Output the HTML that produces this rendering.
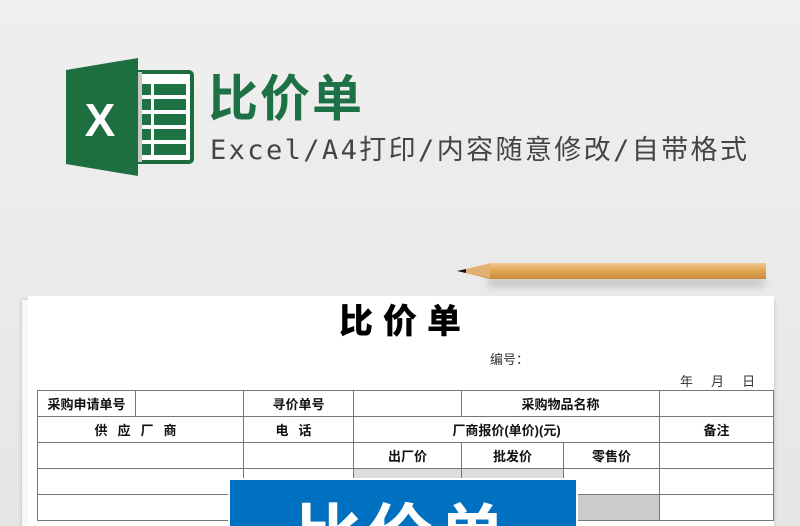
<!DOCTYPE html>
<html style="width:800px;height:526px;overflow:hidden"><head><meta charset="utf-8"><style>
body{margin:0;width:800px;height:526px;overflow:hidden;background:#ebebeb;font-family:"Liberation Sans","Noto Sans CJK SC",sans-serif;position:relative}
.a{position:absolute}
table{border-collapse:collapse;position:absolute;left:37px;top:390px;width:736px;table-layout:fixed}
td{border:1px solid #777;height:25px;font-size:13px;font-weight:bold;text-align:center;padding:0;color:#111}
</style></head><body>
<div class="a" style="left:0;top:0;width:800px;height:526px;background:linear-gradient(#efefef,#e6e6e6)"></div>
<svg class="a" style="left:66px;top:58px" width="130" height="118" viewBox="0 0 130 118">
<rect x="62" y="14" width="64" height="90" rx="3" fill="#fff" stroke="#1d6b3c" stroke-width="4"/>
<rect x="62" y="14" width="14" height="90" fill="#c8c8c8"/>
<g fill="#1f7244">
<rect x="88" y="26" width="32" height="11"/><rect x="88" y="41" width="32" height="11"/><rect x="88" y="56" width="32" height="11"/><rect x="88" y="71" width="32" height="11"/><rect x="88" y="86" width="32" height="11"/>
<rect x="76" y="26" width="9" height="11"/><rect x="76" y="41" width="9" height="11"/><rect x="76" y="56" width="9" height="11"/><rect x="76" y="71" width="9" height="11"/><rect x="76" y="86" width="9" height="11"/>
</g>
<path d="M0 12 L72 0 L72 118 L0 106 Z" fill="#1e6f3f"/>
<text x="34" y="78" font-size="46" font-weight="bold" fill="#fff" text-anchor="middle" font-family="Liberation Sans">X</text>
</svg>
<div class="a" style="left:208px;top:70px;font-size:50px;font-weight:bold;color:#1e7145;letter-spacing:2px;line-height:58px">比价单</div>
<div class="a" style="left:210px;top:134px;font-size:27px;color:#444;letter-spacing:2.4px;line-height:34px;font-family:'DejaVu Sans Mono','Noto Sans CJK SC',monospace">Excel/A4打印/内容随意修改/自带格式</div>
<div class="a" style="left:488px;top:277px;width:276px;height:10px;background:rgba(0,0,0,.15);filter:blur(4px)"></div>
<svg class="a" style="left:456px;top:261px" width="312" height="20">
<defs><linearGradient id="g" x1="0" y1="0" x2="0" y2="1"><stop offset="0" stop-color="#f0c890"/><stop offset=".5" stop-color="#e2a552"/><stop offset="1" stop-color="#c88a3c"/></linearGradient></defs>
<path d="M2 10 L34 2 L310 2 L310 18 L34 18 Z" fill="url(#g)"/>
<path d="M2 10 L34 3 L34 17 Z" fill="#e2b070"/>
<path d="M1 10 L10 8 L10 12 Z" fill="#111"/>
</svg>
<div class="a" style="left:22px;top:300px;width:752px;height:226px;background:#f7f7f7;box-shadow:0 0 4px rgba(0,0,0,.2)"></div>
<div class="a" style="left:28px;top:296px;width:746px;height:230px;background:#fff"></div>
<div class="a" style="left:28px;top:300px;width:754px;font-size:34px;font-weight:900;text-align:center;letter-spacing:10px;line-height:44px">比价单</div>
<div class="a" style="left:490px;top:349px;font-size:13px;color:#333">编号：</div>
<div class="a" style="left:680px;top:371px;font-size:13px;color:#333;white-space:pre">年     月     日</div>
<table>
<colgroup><col style="width:98px"><col style="width:108px"><col style="width:110px"><col style="width:108px"><col style="width:102px"><col style="width:96px"><col style="width:114px"></colgroup>
<tr><td>采购申请单号</td><td></td><td>寻价单号</td><td></td><td colspan="2">采购物品名称</td><td></td></tr>
<tr><td colspan="2" style="letter-spacing:10px">供应厂商</td><td style="letter-spacing:10px">电话</td><td colspan="3">厂商报价(单价)(元)</td><td>备注</td></tr>
<tr><td colspan="2"></td><td></td><td>出厂价</td><td>批发价</td><td>零售价</td><td></td></tr>
<tr><td colspan="2"></td><td></td><td style="background:#ddd"></td><td style="background:#ddd"></td><td></td><td></td></tr>
<tr><td colspan="2"></td><td></td><td></td><td></td><td style="background:#ccc"></td><td></td></tr>
</table>
<svg class="a" style="left:228px;top:478px" width="350" height="48">
<rect x="0" y="0" width="350" height="48" fill="#fff"/>
<rect x="2" y="2" width="346" height="46" fill="#0070c0"/>
<text x="175" y="80" font-size="66" font-weight="bold" fill="#fff" text-anchor="middle" letter-spacing="6" font-family="Liberation Sans,Noto Sans CJK SC,sans-serif">比价单</text>
</svg>
</body></html>
